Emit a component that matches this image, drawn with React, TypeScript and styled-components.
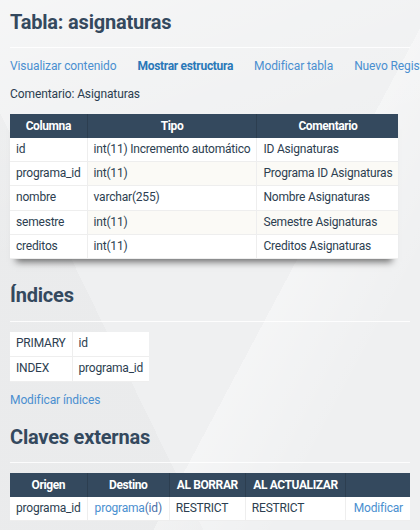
import React from "react";
import styled, { createGlobalStyle, css } from "styled-components";

const Global = createGlobalStyle`
  html, body {
    margin: 0;
    padding: 0;
  }
  body {
    background-color: #eff0f1;
    background-image:
      linear-gradient(118deg, rgba(255,255,255,0) 62%, rgba(255,255,255,0.35) 62%, rgba(255,255,255,0) 80%),
      linear-gradient(64deg, rgba(0,0,0,0.018) 30%, rgba(0,0,0,0) 30%),
      linear-gradient(160deg, rgba(255,255,255,0.4) 0%, rgba(255,255,255,0) 40%);
    min-height: 530px;
    font-family: Roboto, "Liberation Sans", Arial, sans-serif;
    font-size: 12px;
    letter-spacing: -0.1px;
    color: #34495e;
  }
`;

const Page = styled.div`
  padding: 0 10px;
  display: flex;
  flex-direction: column;
  align-items: flex-start;
  overflow: hidden;
`;

const Heading = styled.h2<{ $top: number; $bottom: number }>`
  align-self: stretch;
  margin: 0;
  padding-top: ${(p) => p.$top}px;
  padding-bottom: ${(p) => p.$bottom}px;
  font-size: 20px;
  line-height: 24px;
  font-weight: 700;
  letter-spacing: -0.2px;
  color: #34495e;
  border-bottom: 1px solid rgba(255, 255, 255, 0.85);
`;

const Nav = styled.nav`
  display: flex;
  gap: 21px;
  margin-top: 10px;
  white-space: nowrap;
  line-height: 16px;
`;

const Link = styled.a<{ $active?: boolean }>`
  color: #4a8fd0;
  text-decoration: none;
  ${(p) =>
    p.$active &&
    css`
      color: #2a78b8;
      font-weight: 700;
      letter-spacing: -0.3px;
    `}
`;

const Para = styled.p<{ $top: number }>`
  margin: ${(p) => p.$top}px 0 0;
  line-height: 16px;
  color: #2c3e50;
`;

const Table = styled.table<{ $shadow?: boolean; $top: number }>`
  border-collapse: separate;
  border-spacing: 0;
  margin-top: ${(p) => p.$top}px;
  background: #fff;
  white-space: nowrap;
  letter-spacing: -0.2px;
  ${(p) =>
    p.$shadow &&
    css`
      box-shadow: 0 9px 7px -6px rgba(0, 0, 0, 0.55);
    `}
`;

const Th = styled.th<{ $pad?: number }>`
  background: #34495e;
  color: #fff;
  font-weight: 700;
  letter-spacing: -0.4px;
  text-align: center;
  padding: 4px ${(p) => p.$pad ?? 6}px;
  line-height: 16px;
  border-right: 1px solid #2c3e50;
  &:last-child {
    border-right: none;
  }
`;

const Td = styled.td<{ $alt?: boolean; $v?: number; $pad?: number }>`
  padding: ${(p) => p.$v ?? 4}px ${(p) => p.$pad ?? 6}px;
  line-height: 15.2px;
  color: #2c3e50;
  background: ${(p) => (p.$alt ? "#fbfaf6" : "#ffffff")};
  border-bottom: 1px solid #eeeeee;
  border-right: 1px solid #eeeeee;
  &:last-child {
    border-right: none;
  }
`;

const Target = styled.span`
  color: #4a6fa8;
`;

const columns = [
  { name: "id", type: "int(11) Incremento automático", comment: "ID Asignaturas" },
  { name: "programa_id", type: "int(11)", comment: "Programa ID Asignaturas" },
  { name: "nombre", type: "varchar(255)", comment: "Nombre Asignaturas" },
  { name: "semestre", type: "int(11)", comment: "Semestre Asignaturas" },
  { name: "creditos", type: "int(11)", comment: "Creditos Asignaturas" },
];

const indexes = [
  { kind: "PRIMARY", cols: "id" },
  { kind: "INDEX", cols: "programa_id" },
];

export default function App() {
  return (
    <>
      <Global />
      <Page>
        <Heading $top={9.5} $bottom={13.5}>
          Tabla: asignaturas
        </Heading>
        <Nav>
          <Link href="#">Visualizar contenido</Link>
          <Link href="#" $active>
            Mostrar estructura
          </Link>
          <Link href="#">Modificar tabla</Link>
          <Link href="#">Nuevo Registro</Link>
        </Nav>
        <Para $top={12}>Comentario: Asignaturas</Para>
        <Table $shadow $top={12}>
          <thead>
            <tr>
              <Th>Columna</Th>
              <Th>Tipo</Th>
              <Th>Comentario</Th>
            </tr>
          </thead>
          <tbody>
            {columns.map((c, i) => (
              <tr key={c.name}>
                <Td>{c.name}</Td>
                <Td $alt={i % 2 === 1}>{c.type}</Td>
                <Td $alt={i % 2 === 1}>{c.comment}</Td>
              </tr>
            ))}
          </tbody>
        </Table>
        <Heading $top={24} $bottom={13.5}>
          Índices
        </Heading>
        <Table $top={10}>
          <tbody>
            {indexes.map((x) => (
              <tr key={x.kind}>
                <Td $v={4.5}>{x.kind}</Td>
                <Td $v={4.5}>{x.cols}</Td>
              </tr>
            ))}
          </tbody>
        </Table>
        <Para $top={10}>
          <Link href="#">Modificar índices</Link>
        </Para>
        <Heading $top={17} $bottom={13}>
          Claves externas
        </Heading>
        <Table $top={10}>
          <thead>
            <tr>
              <Th>Origen</Th>
              <Th>Destino</Th>
              <Th $pad={7}>AL BORRAR</Th>
              <Th $pad={7.5}>AL ACTUALIZAR</Th>
              <Th></Th>
            </tr>
          </thead>
          <tbody>
            <tr>
              <Td>programa_id</Td>
              <Td $pad={7}>
                <Link href="#">programa</Link>
                <Target>(id)</Target>
              </Td>
              <Td>RESTRICT</Td>
              <Td>RESTRICT</Td>
              <Td $pad={7.5}>
                <Link href="#">Modificar</Link>
              </Td>
            </tr>
          </tbody>
        </Table>
      </Page>
    </>
  );
}
